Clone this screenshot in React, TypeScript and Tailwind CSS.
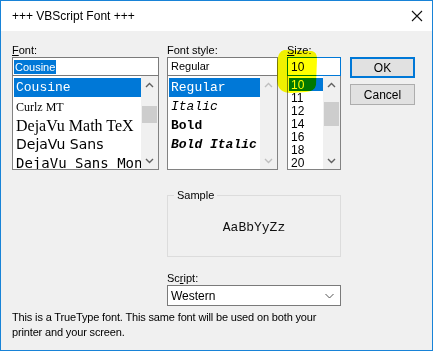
import React from 'react';

const ui = { fontFamily: '"Liberation Sans", Arial, sans-serif' };
const mono = { fontFamily: '"Liberation Mono", "Cousine", monospace' };

function Chevron({ dir, disabled }: { dir: 'up' | 'down'; disabled?: boolean }) {
    const c = disabled ? '#bfbfbf' : '#606060';
    return (
        <svg width="9" height="6" viewBox="0 0 9 6">
            {dir === 'up' ? (
                <path d="M1 5 L4.5 1.5 L8 5" fill="none" stroke={c} strokeWidth="1.4" />
            ) : (
                <path d="M1 1 L4.5 4.5 L8 1" fill="none" stroke={c} strokeWidth="1.4" />
            )}
        </svg>
    );
}

// vertical scrollbar, thumbTop/thumbH are px inside the track
function ScrollBar({ thumbTop, thumbH, disabled }: { thumbTop?: number; thumbH?: number; disabled?: boolean }) {
    return (
        <div className="w-[17px] h-full bg-[#f0f0f0] flex flex-col shrink-0">
            <div className="h-[17px] flex items-center justify-center">
                <Chevron dir="up" disabled={disabled} />
            </div>
            <div className="flex-1 relative">
                {!disabled && (
                    <div className="absolute left-[1px] right-[1px] bg-[#cdcdcd]" style={{ top: thumbTop, height: thumbH }} />
                )}
            </div>
            <div className="h-[17px] flex items-center justify-center">
                <Chevron dir="down" disabled={disabled} />
            </div>
        </div>
    );
}

const fonts = [
    { name: 'Cousine', cls: 'text-[13px]', style: mono },
    { name: 'Curlz MT', cls: 'text-[12px]', style: { fontFamily: '"Liberation Serif", serif' } },
    { name: 'DejaVu Math TeX', cls: 'text-[16px]', style: { fontFamily: '"Liberation Serif", serif' } },
    { name: 'DejaVu Sans', cls: 'text-[14px]', style: { fontFamily: '"DejaVu Sans", sans-serif' } },
    { name: 'DejaVu Sans Mono', cls: 'text-[14px]', style: { fontFamily: '"DejaVu Sans Mono", monospace' } },
];

const styles = [
    { name: 'Regular', cls: '' },
    { name: 'Italic', cls: 'italic' },
    { name: 'Bold', cls: 'font-bold' },
    { name: 'Bold Italic', cls: 'font-bold italic' },
];

const sizes = ['10', '11', '12', '14', '16', '18', '20'];

export default function App() {
    return (
        <div className="relative w-[433px] h-[351px] border border-[#1883d7] bg-[#f0f0f0] flex flex-col overflow-hidden text-black" style={ui}>
            {/* title bar */}
            <div className="h-[30px] bg-white flex items-center justify-between pl-[11px] pr-[9px] shrink-0">
                <span className="text-[12px]">+++ VBScript Font +++</span>
                <svg width="12" height="12" viewBox="0 0 12 12">
                    <path d="M1 1 L11 11 M11 1 L1 11" stroke="#111" strokeWidth="1.1" />
                </svg>
            </div>

            <div className="flex flex-col pl-[11px] pt-[12px] text-[11px]">
                <div className="flex">
                    {/* Font */}
                    <div className="w-[147px] flex flex-col">
                        <div className="h-[14px] leading-[14px]"><span className="underline">F</span>ont:</div>
                        <div className="h-[19px] bg-white border border-[#7a7a7a] flex items-center px-[1px]">
                            <span className="bg-[#0078d7] text-white leading-[14px] px-[1px]">Cousine</span>
                        </div>
                        <div className="h-[94px] bg-white border border-[#828282] border-t-0 flex">
                            <div className="flex-1 flex flex-col overflow-hidden pt-[2px] pl-[1px]">
                                {fonts.map((f, i) => (
                                    <div
                                        key={f.name}
                                        className={`h-[19px] shrink-0 flex items-center pl-[2px] whitespace-nowrap ${f.cls} ${i === 0 ? 'bg-[#0078d7] text-white' : ''}`}
                                        style={f.style}
                                    >
                                        {f.name}
                                    </div>
                                ))}
                            </div>
                            <ScrollBar thumbTop={13} thumbH={17} />
                        </div>
                    </div>

                    {/* Font style */}
                    <div className="w-[111px] ml-[8px] flex flex-col">
                        <div className="h-[14px] leading-[14px]">Font style:</div>
                        <div className="h-[19px] bg-white border border-[#7a7a7a] flex items-center px-[3px]">Regular</div>
                        <div className="h-[94px] bg-white border border-[#828282] border-t-0 flex">
                            <div className="flex-1 flex flex-col overflow-hidden pt-[2px] pl-[1px]">
                                {styles.map((s, i) => (
                                    <div
                                        key={s.name}
                                        className={`h-[19px] shrink-0 flex items-center pl-[2px] text-[13px] whitespace-nowrap ${s.cls} ${i === 0 ? 'bg-[#0078d7] text-white' : ''}`}
                                        style={mono}
                                    >
                                        {s.name}
                                    </div>
                                ))}
                            </div>
                            <ScrollBar disabled />
                        </div>
                    </div>

                    {/* Size */}
                    <div className="w-[54px] ml-[9px] flex flex-col">
                        <div className="h-[14px] leading-[14px]"><span className="underline">S</span>ize:</div>
                        <div className="h-[19px] bg-white border border-[#0078d7] flex items-center px-[3px] text-[12px]">10</div>
                        <div className="h-[94px] bg-white border border-[#828282] border-t-0 flex">
                            <div className="flex-1 flex flex-col overflow-hidden pt-[2px] pl-[1px] text-[12px]">
                                {sizes.map((s, i) => (
                                    <div
                                        key={s}
                                        className={`h-[13px] shrink-0 flex items-center pl-[2px] ${i === 0 ? 'bg-[#0078d7] text-white' : ''}`}
                                    >
                                        {s}
                                    </div>
                                ))}
                            </div>
                            <ScrollBar thumbTop={9} thumbH={24} />
                        </div>
                    </div>

                    {/* buttons */}
                    <div className="w-[65px] ml-[9px] flex flex-col pt-[14px] gap-[6px]">
                        <div className="h-[21px] bg-[#e1e1e1] border-2 border-[#0078d7] flex items-center justify-center text-[12px]">OK</div>
                        <div className="h-[21px] bg-[#e1e1e1] border border-[#adadad] flex items-center justify-center text-[12px]">Cancel</div>
                    </div>
                </div>

                {/* sample + script */}
                <div className="ml-[155px] w-[174px] mt-[25px] flex flex-col">
                    <div className="relative h-[62px] border border-[#dcdcdc] flex items-center justify-center">
                        <span className="absolute -top-[8px] left-[6px] px-[3px] bg-[#f0f0f0] leading-[14px]">Sample</span>
                        <span className="text-[13px] mt-[4px] text-[#111]" style={mono}>AaBbYyZz</span>
                    </div>
                    <div className="mt-[14px] h-[14px] leading-[14px]">Sc<span className="underline">r</span>ipt:</div>
                    <div className="h-[21px] bg-white border border-[#7a7a7a] flex items-center justify-between pl-[3px] pr-[6px] text-[12px]">
                        <span>Western</span>
                        <svg width="9" height="6" viewBox="0 0 9 6">
                            <path d="M0.5 1 L4.5 5 L8.5 1" fill="none" stroke="#555" strokeWidth="1" />
                        </svg>
                    </div>
                </div>

                <div className="mt-[4px] leading-[15px] w-[320px] tracking-[-0.15px]">
                    This is a TrueType font. This same font will be used on both your printer and your screen.
                </div>
            </div>

            {/* highlighter mark */}
            <svg className="absolute left-0 top-0 pointer-events-none mix-blend-multiply" width="433" height="351">
                <path
                    d="M283 49 L311 50 Q316 51 316 58 L315 84 Q314 90 305 91 L290 92 Q277 92 276 80 L276 62 Q277 50 283 49 Z"
                    fill="#ffff00"
                />
            </svg>
        </div>
    );
}
